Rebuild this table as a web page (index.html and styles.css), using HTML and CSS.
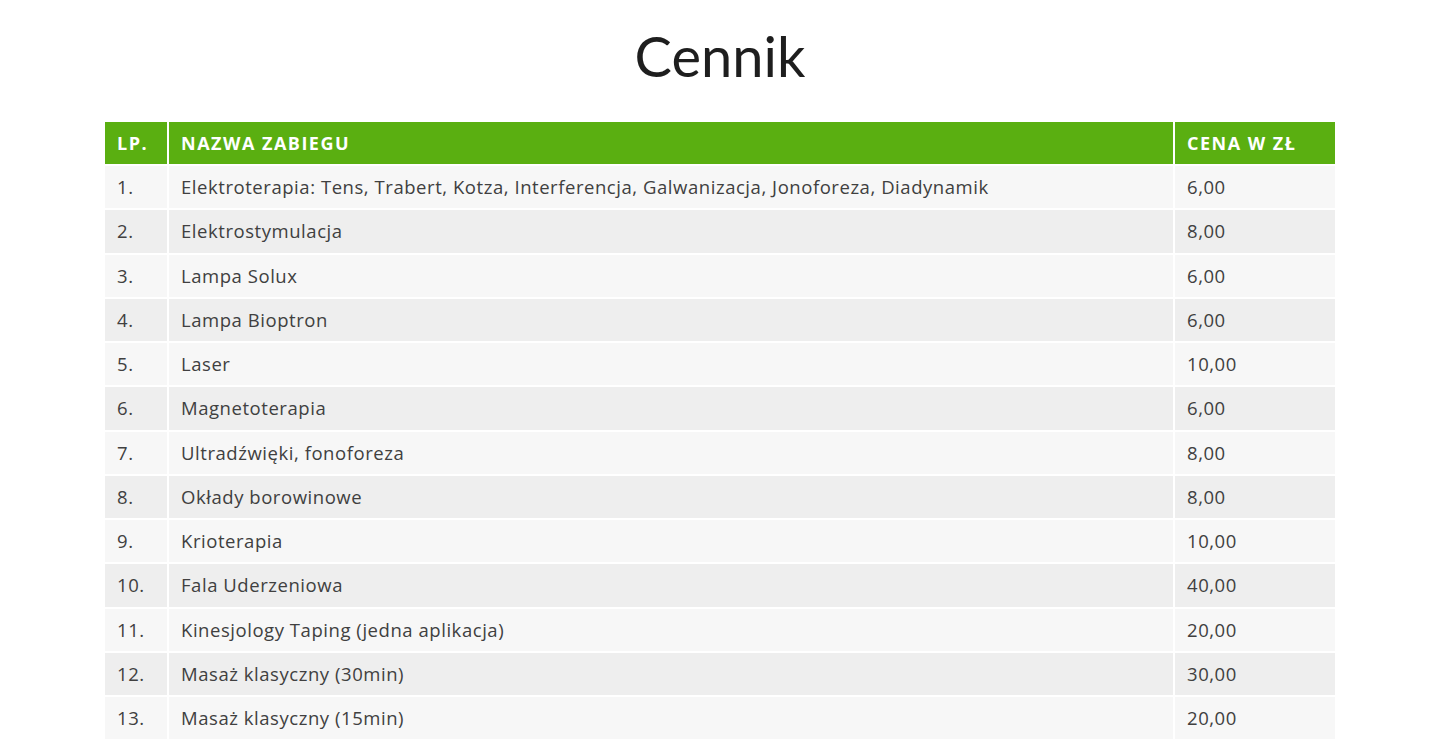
FILE: index.html
```html
<!DOCTYPE html>
<html lang="pl">
<head>
<meta charset="utf-8">
<title>Cennik</title>
<link rel="stylesheet" href="styles.css">
</head>
<body>
<main class="page">
  <h1 class="title">Cennik</h1>
  <table class="price-table">
    <thead>
      <tr><th class="col-lp">LP.</th><th class="col-name">NAZWA ZABIEGU</th><th class="col-price">CENA W ZŁ</th></tr>
    </thead>
    <tbody>
      <tr><td>1.</td><td>Elektroterapia: Tens, Trabert, Kotza, Interferencja, Galwanizacja, Jonoforeza, Diadynamik</td><td>6,00</td></tr>
      <tr><td>2.</td><td>Elektrostymulacja</td><td>8,00</td></tr>
      <tr><td>3.</td><td>Lampa Solux</td><td>6,00</td></tr>
      <tr><td>4.</td><td>Lampa Bioptron</td><td>6,00</td></tr>
      <tr><td>5.</td><td>Laser</td><td>10,00</td></tr>
      <tr><td>6.</td><td>Magnetoterapia</td><td>6,00</td></tr>
      <tr><td>7.</td><td>Ultradźwięki, fonoforeza</td><td>8,00</td></tr>
      <tr><td>8.</td><td>Okłady borowinowe</td><td>8,00</td></tr>
      <tr><td>9.</td><td>Krioterapia</td><td>10,00</td></tr>
      <tr><td>10.</td><td>Fala Uderzeniowa</td><td>40,00</td></tr>
      <tr><td>11.</td><td>Kinesjology Taping (jedna aplikacja)</td><td>20,00</td></tr>
      <tr><td>12.</td><td>Masaż klasyczny (30min)</td><td>30,00</td></tr>
      <tr><td>13.</td><td>Masaż klasyczny (15min)</td><td>20,00</td></tr>
    </tbody>
  </table>
</main>
</body>
</html>
```

FILE: styles.css
```css
html, body {
  margin: 0;
  padding: 0;
  background: #ffffff;
}
body {
  font-family: "Open Sans", "Liberation Sans", sans-serif;
  color: #404040;
}
.page {
  width: 1234px;
  margin: 0 auto;
  padding-top: 24px;
}
.title {
  margin: 0 0 32px;
  text-align: center;
  font-family: "Lato", "Open Sans", sans-serif;
  font-weight: 400;
  font-size: 56px;
  line-height: 64px;
  color: #1e1e1e;
}
.price-table {
  width: 100%;
  border-collapse: separate;
  border-spacing: 2px;
  font-size: 18.5px;
  letter-spacing: 0.55px;
}
.price-table th {
  background: #5aaf11;
  color: #ffffff;
  text-align: left;
  font-weight: 700;
  height: 42px;
  line-height: 42px;
  padding: 0 12px;
  font-size: 18px;
  letter-spacing: 1.5px;
}
.price-table td {
  height: 42.25px;
  line-height: 42.25px;
  padding: 0 12px;
  text-align: left;
}
.price-table tbody tr:nth-child(odd) td { background: #f7f7f7; }
.price-table tbody tr:nth-child(even) td { background: #eeeeee; }
.col-lp { width: 38px; }
.col-price { width: 136px; }
```
